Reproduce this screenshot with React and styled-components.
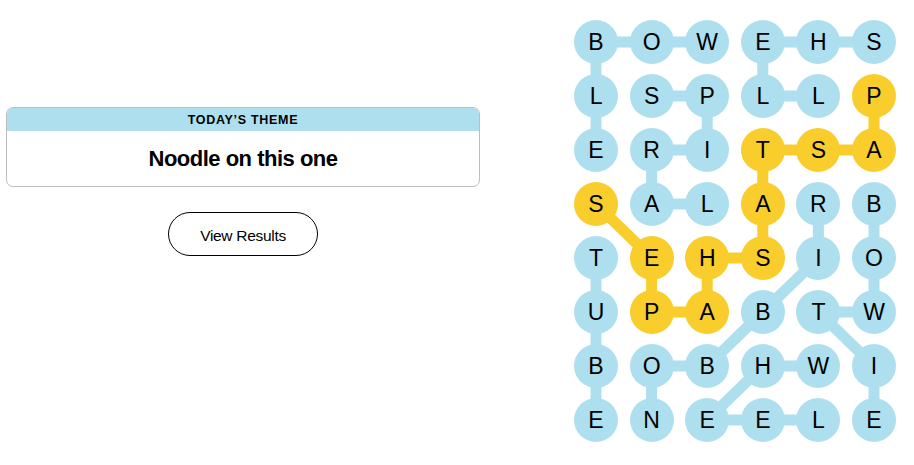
import React from "react";
import styled, { createGlobalStyle } from "styled-components";

const GlobalStyle = createGlobalStyle`
  html, body { margin: 0; padding: 0; background: #fff; }
  body { font-family: "Liberation Sans", Arial, sans-serif; color: #000; }
`;

const BLUE = "#aedfee";
const YELLOW = "#f8cd2c";
const CELL = 44;
const COL_GAP = 11.6;
const ROW_GAP = 10;

const GRID = [
  "BOWEHS",
  "LSPLLP",
  "ERITSA",
  "SALARB",
  "TEHSIO",
  "UPABTW",
  "BOBHWI",
  "ENEELE",
];

const WORDS = [
  { path: [[2, 0], [1, 0], [0, 0], [0, 1], [0, 2]], spangram: false },
  { path: [[0, 5], [0, 4], [0, 3], [1, 3], [1, 4]], spangram: false },
  { path: [[1, 1], [1, 2], [2, 2], [2, 1], [3, 1], [3, 2]], spangram: false },
  {
    path: [[1, 5], [2, 5], [2, 4], [2, 3], [3, 3], [4, 3], [4, 2], [5, 2], [5, 1], [4, 1], [3, 0]],
    spangram: true,
  },
  { path: [[3, 4], [4, 4], [5, 3], [6, 2], [6, 1], [7, 1]], spangram: false },
  { path: [[3, 5], [4, 5], [5, 5], [5, 4], [6, 5], [7, 5]], spangram: false },
  { path: [[4, 0], [5, 0], [6, 0], [7, 0]], spangram: false },
  { path: [[6, 4], [6, 3], [7, 2], [7, 3], [7, 4]], spangram: false },
];

const cellColor = {};
WORDS.forEach((w) => w.path.forEach(([r, c]) => (cellColor[`${r}-${c}`] = w.spangram ? YELLOW : BLUE)));

const center = (r, c) => [c * (CELL + COL_GAP) + CELL / 2, r * (CELL + ROW_GAP) + CELL / 2];

const Page = styled.main`
  display: flex;
  justify-content: space-between;
  align-items: flex-start;
  padding: 20px 18px 0 6px;
`;

const LeftPanel = styled.section`
  width: 474px;
  padding-top: 87px;
  display: flex;
  flex-direction: column;
  align-items: center;
  gap: 25px;
`;

const ThemeCard = styled.div`
  width: 100%;
  box-sizing: border-box;
  border: 1px solid #bdbdbd;
  border-radius: 7px;
  overflow: hidden;
  display: flex;
  flex-direction: column;
`;

const ThemeHeader = styled.div`
  background: ${BLUE};
  height: 23px;
  display: flex;
  align-items: center;
  justify-content: center;
  font-size: 12.5px;
  font-weight: 700;
  letter-spacing: 0.7px;
  text-transform: uppercase;
`;

const ThemeTitle = styled.h1`
  margin: 0;
  height: 55px;
  padding-top: 1px;
  box-sizing: border-box;
  display: flex;
  align-items: center;
  justify-content: center;
  font-size: 22px;
  font-weight: 700;
  letter-spacing: -0.5px;
`;

const ResultsButton = styled.button`
  width: 150px;
  height: 44px;
  padding: 3px 0 0;
  border: 1px solid #000;
  border-radius: 22px;
  background: #fff;
  color: #000;
  font-family: "Liberation Sans", Arial, sans-serif;
  font-size: 15.5px;
  letter-spacing: -0.3px;
  cursor: pointer;
`;

const Board = styled.div`
  position: relative;
  display: grid;
  grid-template-columns: repeat(6, ${CELL}px);
  grid-auto-rows: ${CELL}px;
  column-gap: ${COL_GAP}px;
  row-gap: ${ROW_GAP}px;
`;

const Links = styled.svg`
  position: absolute;
  inset: 0;
  width: 100%;
  height: 100%;
  z-index: 0;
  overflow: visible;
`;

const Letter = styled.div`
  position: relative;
  z-index: 1;
  width: ${CELL}px;
  height: ${CELL}px;
  border-radius: 50%;
  background: ${(p) => p.$color};
  display: flex;
  align-items: center;
  justify-content: center;
  font-size: 23px;
  line-height: 1;
  color: #000;
`;

export default function App() {
  return (
    <>
      <GlobalStyle />
      <Page>
        <LeftPanel>
          <ThemeCard>
            <ThemeHeader>Today’s Theme</ThemeHeader>
            <ThemeTitle>Noodle on this one</ThemeTitle>
          </ThemeCard>
          <ResultsButton>View Results</ResultsButton>
        </LeftPanel>
        <Board>
          <Links>
            {WORDS.map((w, i) =>
              w.path.slice(1).map(([r, c], j) => {
                const [x1, y1] = center(...w.path[j]);
                const [x2, y2] = center(r, c);
                return (
                  <line
                    key={`${i}-${j}`}
                    x1={x1}
                    y1={y1}
                    x2={x2}
                    y2={y2}
                    stroke={w.spangram ? YELLOW : BLUE}
                    strokeWidth="11"
                  />
                );
              })
            )}
          </Links>
          {GRID.map((row, r) =>
            row.split("").map((ch, c) => (
              <Letter key={`${r}-${c}`} $color={cellColor[`${r}-${c}`] || BLUE}>
                {ch}
              </Letter>
            ))
          )}
        </Board>
      </Page>
    </>
  );
}
